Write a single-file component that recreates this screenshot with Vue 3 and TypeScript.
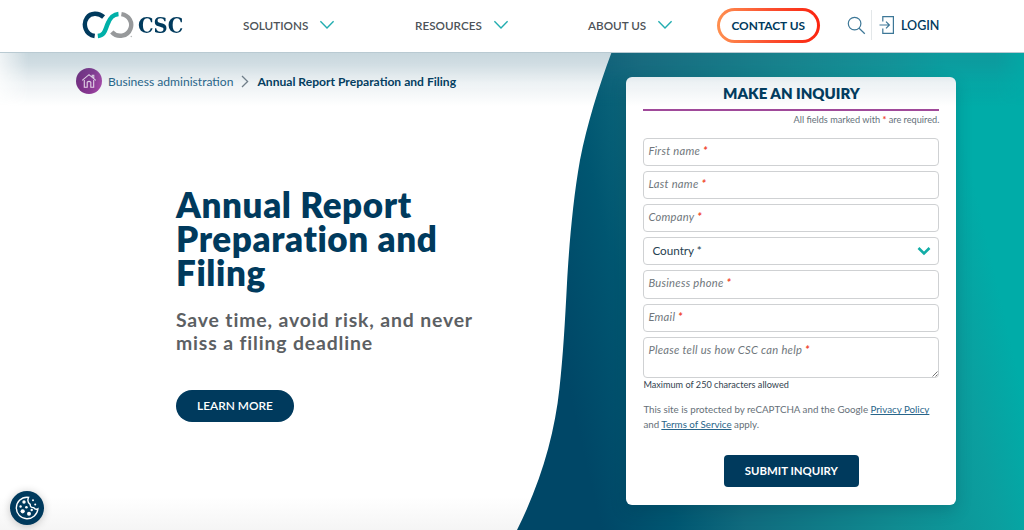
<script setup lang="ts">
interface NavItem { label: string; cls: string }
interface Field { label: string; kind: 'input' | 'select' | 'area' }

const nav: NavItem[] = [
  { label: 'SOLUTIONS', cls: 'solutions' },
  { label: 'RESOURCES', cls: 'resources' },
  { label: 'ABOUT US', cls: 'about' },
]

const fields: Field[] = [
  { label: 'First name', kind: 'input' },
  { label: 'Last name', kind: 'input' },
  { label: 'Company', kind: 'input' },
  { label: 'Country', kind: 'select' },
  { label: 'Business phone', kind: 'input' },
  { label: 'Email', kind: 'input' },
  { label: 'Please tell us how CSC can help', kind: 'area' },
]
</script>

<template>
  <div class="page">
    <header class="header">
      <a class="logo">
        <svg class="mark" width="52" height="28" viewBox="0 0 52 28" fill="none">
          <path d="M21.6 6C16.5 1.4 8.6 1.8 5 6.7C.6 13 3.2 23.6 12.7 25" stroke="#003a5d" stroke-width="4.4" />
          <path d="M15.8 25C23.2 24.2 23.2 18 25.8 12.5C28 7.3 30.4 3.5 36.5 3" stroke="#00b0a8" stroke-width="4.5" />
          <path d="M39.4 3.1C47.4 4.3 50.8 11.6 48.5 17.6C45.6 25.6 35.4 27.2 29.8 21" stroke="#97999b" stroke-width="4.4" />
          <circle cx="49.3" cy="25.5" r=".8" fill="#b9bbbc" />
        </svg>
        <span class="wordmark">CSC</span>
      </a>
      <a v-for="item in nav" :key="item.label" class="nav-item" :class="item.cls">
        <span>{{ item.label }}</span>
        <svg width="16" height="10" viewBox="0 0 16 10" fill="none">
          <path d="M1.4 1.3L8 7.9L14.6 1.3" stroke="#22adb0" stroke-width="1.4" />
        </svg>
      </a>
      <a class="contact"><span>CONTACT US</span></a>
      <a class="search">
        <svg width="19" height="19" viewBox="0 0 19 19" fill="none" stroke="#3d7797" stroke-width="1.2">
          <circle cx="7.6" cy="7.6" r="6.3" />
          <path d="M12.1 12.2L17.8 17.8" />
        </svg>
      </a>
      <a class="login">
        <svg width="16" height="20" viewBox="0 0 16 20" fill="none" stroke="#3d7797" stroke-width="1.2">
          <path d="M3.8 6.5V1.7H14.4V18.3H3.8V13.5" />
          <path d="M.5 10H10.2M7 6.6L10.4 10L7 13.4" />
        </svg>
        <span>LOGIN</span>
      </a>
    </header>

    <main class="hero">
      <svg class="wave" width="1024" height="477" viewBox="0 53 1024 477">
        <defs>
          <linearGradient id="sea" gradientUnits="userSpaceOnUse" x1="555" y1="330" x2="985" y2="230">
            <stop offset="0" stop-color="#004767" />
            <stop offset=".16" stop-color="#005671" />
            <stop offset=".32" stop-color="#106b7e" />
            <stop offset=".65" stop-color="#108b91" />
            <stop offset=".88" stop-color="#0b9f9f" />
            <stop offset="1" stop-color="#00aca8" />
          </linearGradient>
        </defs>
        <path fill="url(#sea)" d="M611.7 52C599 86 587 124 580 160C573 199 569 247 567 283C565 322 563 357 559.5 388C554.5 435 541 482 517 530H1024V52Z" />
      </svg>

      <section class="intro">
        <nav class="crumbs">
          <span class="home">
            <svg width="16" height="16" viewBox="0 0 16 16" fill="none" stroke="#f3dcf0" stroke-width="1.1">
              <path d="M1.2 7.4L8 1.7L14.8 7.4M3.3 7V14.3H6.2V9.2Q8 7.4 9.8 9.2V14.3H12.7V7M11.2 4V2.2H12.8V5.5" />
            </svg>
          </span>
          <a class="parent">Business administration</a>
          <svg class="sep" width="8" height="13" viewBox="0 0 8 13" fill="none">
            <path d="M1 1L6.6 6.5L1 12" stroke="#77818a" stroke-width="1.3" />
          </svg>
          <strong>Annual Report Preparation and Filing</strong>
        </nav>
        <h1>Annual Report<br>Preparation and<br>Filing</h1>
        <p class="lead">Save time, avoid risk, and never<br>miss a filing deadline</p>
        <a class="learn">LEARN MORE</a>
      </section>

      <form class="card" @submit.prevent>
        <h2>MAKE AN INQUIRY</h2>
        <div class="rule"></div>
        <p class="required">All fields marked with <b>*</b> are required.</p>
        <div class="fields">
          <div v-for="f in fields" :key="f.label" class="field" :class="f.kind">
            <span>{{ f.label }} <b>*</b></span>
            <svg v-if="f.kind === 'select'" width="14" height="10" viewBox="0 0 14 10" fill="none">
              <path d="M1.5 2L7 7.4L12.5 2" stroke="#12ada7" stroke-width="2.6" />
            </svg>
            <svg v-if="f.kind === 'area'" class="grip" width="6" height="6" viewBox="0 0 6 6">
              <path d="M.5 5.5L5.5 .5M3.5 5.5L5.5 3.5" stroke="#666" stroke-width=".9" />
            </svg>
          </div>
        </div>
        <p class="limit">Maximum of 250 characters allowed</p>
        <p class="legal">This site is protected by reCAPTCHA and the Google <a>Privacy Policy</a><br>and <a>Terms of Service</a> apply.</p>
        <button class="submit" type="submit">SUBMIT INQUIRY</button>
      </form>
      <div class="shade"></div>
    </main>

    <button class="cookie" aria-label="Cookie settings">
      <svg width="26" height="26" viewBox="0 0 26 26" fill="none">
        <path d="M13 2.2A10.8 10.8 0 1 0 23.9 13.8Q21.3 15.2 19.7 12.6Q16.2 13 16.2 9.4Q12.5 6.8 14.6 2.3Z" stroke="#fff" stroke-width="1.4" />
        <g fill="#fff">
          <circle cx="10" cy="7" r="1.7" /><circle cx="6.6" cy="11.5" r="1.2" />
          <circle cx="12.4" cy="12.3" r="1.3" /><circle cx="8.7" cy="16.3" r="2.1" />
          <circle cx="15" cy="18.8" r="2" /><circle cx="17.7" cy="15" r="1.2" />
          <circle cx="19" cy="5.2" r="1" /><circle cx="21.2" cy="9.5" r="1" />
        </g>
      </svg>
    </button>
  </div>
</template>

<style>
html, body { margin: 0; overflow: hidden; }
</style>

<style scoped>
* { box-sizing: border-box; }
.page {
  width: 1024px;
  height: 530px;
  overflow: hidden;
  position: relative;
  background: #fff;
  font-family: Lato, "Open Sans", sans-serif;
  color: #003a5d;
}
.header {
  height: 53px;
  display: grid;
  grid-template-columns: 160px 172px 173px 129px 102.5px 52.5px 1fr;
  align-items: center;
  padding: 0 82px 2px 83px;
  border-bottom: 1px solid #b9cad2;
}
.logo { display: flex; align-items: center; }
.mark { display: block; margin-left: -1px; }
.wordmark {
  margin-left: 4px;
  font: bold 22.5px/28px "DejaVu Serif", serif;
  transform: scaleX(.87);
  transform-origin: left;
}
.nav-item {
  display: flex;
  align-items: center;
  font-size: 11.7px;
  font-weight: 600;
  color: #4d5358;
}
.nav-item span { white-space: nowrap; }
.nav-item svg { margin-left: 11px; }
.contact {
  height: 35px;
  padding: 3px;
  border-radius: 18px;
  background: linear-gradient(90deg, #ff9050, #fb5130 50%, #fb230e);
}
.contact span {
  display: flex;
  align-items: center;
  justify-content: center;
  height: 29px;
  border-radius: 15px;
  background: #fff;
  font-size: 11.9px;
  font-weight: 700;
}
.search {
  height: 30px;
  display: flex;
  align-items: center;
  justify-content: flex-end;
  padding-right: 5px;
  border-right: 1px solid #e3e7e9;
}
.login { display: flex; align-items: center; padding-left: 7px; font-size: 12.5px; font-weight: 600; white-space: nowrap; }
.login span { margin-left: 6px; }
.hero {
  position: relative;
  height: 477px;
  display: flex;
  background: linear-gradient(#fff 93%, #f5f5f5);
}
.wave { position: absolute; left: 0; top: 0; }
.shade {
  position: absolute;
  inset: 0 0 auto;
  height: 54px;
  pointer-events: none;
  background: linear-gradient(rgba(50, 105, 130, .27), rgba(50, 105, 130, .22) 22%, rgba(50, 105, 130, .09) 55%, rgba(50, 105, 130, 0));
  mask-image: linear-gradient(90deg, rgba(0, 0, 0, .3), #000 28px, #000 996px, rgba(0, 0, 0, .3));
}
.intro { position: relative; width: 626.4px; flex: none; }
.crumbs { display: flex; align-items: center; height: 26px; margin: 15px 0 0 76px; font-size: 12.1px; white-space: nowrap; }
.home {
  width: 26px;
  height: 26px;
  display: flex;
  align-items: center;
  justify-content: center;
  border-radius: 50%;
  background: linear-gradient(100deg, #76297f, #8e3594 60%, #b34baf);
}
.parent { margin-left: 6px; color: #28658a; }
.sep { margin: 1px 8px 0 8px; }
.crumbs strong { font-weight: 700; font-size: 12.1px; }
h1 { margin: 93px 0 0 176px; font-size: 35px; line-height: 34px; font-weight: 800; letter-spacing: .6px; }
.lead { margin: 18.5px 0 0 176px; font-size: 19.4px; line-height: 23.5px; font-weight: 700; letter-spacing: .85px; color: #5c6063; }
.learn {
  display: flex;
  align-items: center;
  justify-content: center;
  width: 118px;
  height: 32px;
  margin: 35.5px 0 0 176px;
  padding-bottom: 1px;
  border-radius: 17px;
  background: #003a5d;
  color: #fff;
  font-size: 11.9px;
  font-weight: 600;
}
.card {
  position: relative;
  width: 330px;
  height: 427.5px;
  margin-top: 24px;
  padding: 0 17px;
  border-radius: 6px;
  background: #fff;
  box-shadow: 0 5px 16px rgba(0, 45, 65, .22);
}
h2 {
  margin: 0;
  height: 32px;
  text-align: center;
  font-size: 15px;
  line-height: 32px;
  font-weight: 800;
}
.rule { height: 1.5px; background: #a04a9a; }
.required { margin: 1.5px 0 0; height: 16px; line-height: 16px; font-size: 9.2px; text-align: right; color: #65717a; }
.required b, .field b { color: #f0452d; font-weight: 700; }
.fields { display: grid; gap: 5px; margin-top: 9.7px; }
.field {
  position: relative;
  height: 28.2px;
  padding: 0 4px;
  border: 1.5px solid #cfd1d3;
  border-radius: 4px;
  font-size: 11.2px;
  line-height: 24px;
  letter-spacing: .27px;
  font-style: italic;
  color: #70777c;
}
.select {
  display: flex;
  align-items: center;
  justify-content: space-between;
  padding: 0 7px 0 8px;
  font-style: normal;
  font-size: 11.7px;
  letter-spacing: 0;
  color: #26404f;
}
.select span { padding-bottom: 2px; }
.select b { color: inherit; font-weight: 400; }
.area { height: 41px; }
.grip { position: absolute; right: 0; bottom: 0; }
.limit { margin: 0; font-size: 9.15px; line-height: 13px; color: #33434f; }
.legal { margin: 11.5px 0 0; font-size: 9.75px; line-height: 14.5px; color: #667078; white-space: nowrap; }
.legal a { color: #28658a; text-decoration: underline; }
.submit {
  display: block;
  width: 135px;
  height: 32px;
  margin: 23.5px auto 0;
  padding: 0 0 1px;
  border: 0;
  border-radius: 4px;
  background: #003a5d;
  color: #fff;
  font: 700 11.4px Lato, sans-serif;
}
.cookie {
  position: absolute;
  left: 10px;
  top: 491px;
  width: 34px;
  height: 34px;
  padding: 0;
  display: flex;
  align-items: center;
  justify-content: center;
  border: 0;
  border-radius: 50%;
  background: #003a5d;
  box-shadow: 0 1px 8px rgba(0, 0, 0, .22);
}
</style>
